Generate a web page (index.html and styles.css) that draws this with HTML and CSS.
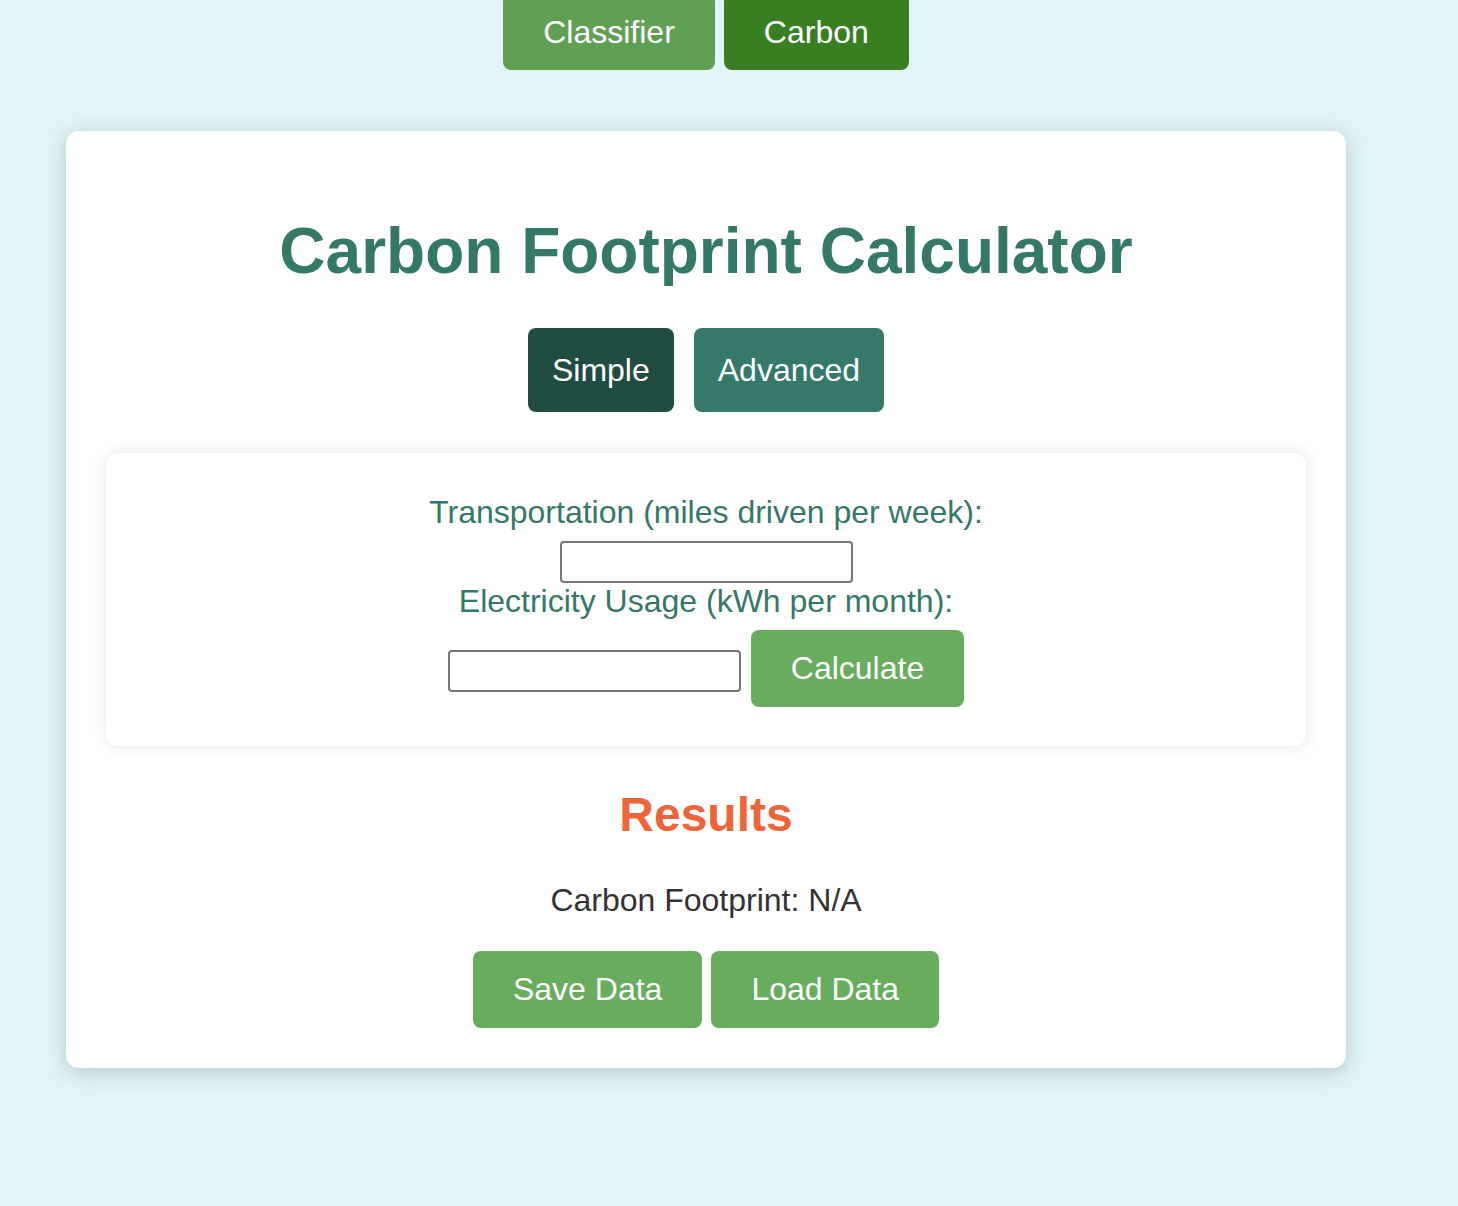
FILE: index.html
```html
<!DOCTYPE html>
<html lang="en">
<head>
<meta charset="utf-8">
<title>Carbon Footprint Calculator</title>
<link rel="stylesheet" href="styles.css">
</head>
<body>
<div class="page">
  <nav class="topnav">
    <button class="nav-btn nav-classifier">Classifier</button>
    <button class="nav-btn nav-carbon">Carbon</button>
  </nav>
  <main class="card">
    <h1 class="title">Carbon Footprint Calculator</h1>
    <div class="modes">
      <button class="mode-btn mode-simple">Simple</button>
      <button class="mode-btn mode-advanced">Advanced</button>
    </div>
    <div class="form-card">
      <label class="field-label" for="miles">Transportation (miles driven per week):</label>
      <input class="field-input" id="miles" type="text">
      <label class="field-label" for="kwh">Electricity Usage (kWh per month):</label>
      <div class="field-row">
        <input class="field-input" id="kwh" type="text">
        <button class="green-btn">Calculate</button>
      </div>
    </div>
    <h2 class="results-title">Results</h2>
    <p class="results-text">Carbon Footprint: N/A</p>
    <div class="data-actions">
      <button class="green-btn">Save Data</button>
      <button class="green-btn">Load Data</button>
    </div>
  </main>
</div>
</body>
</html>
```

FILE: styles.css
```css
html, body {
  margin: 0;
  padding: 0;
  background: #e2f4f8;
  font-family: "Liberation Sans", Arial, sans-serif;
  min-height: 100%;
}

.page {
  width: 1412px;
  min-height: 1206px;
  box-sizing: border-box;
  padding-bottom: 60px;
  display: flex;
  flex-direction: column;
  align-items: center;
}

button {
  font-family: "Liberation Sans", Arial, sans-serif;
  font-size: 32px;
  line-height: 37px;
  color: #ffffff;
  border: none;
  cursor: pointer;
}

.topnav {
  display: flex;
  gap: 9px;
  margin-top: -6px;
}

.nav-btn {
  padding: 20px 40px 19px;
  border-radius: 8px;
}

.nav-classifier { background: #5fa055; }
.nav-carbon { background: #387f22; }

.card {
  box-sizing: border-box;
  width: 1280px;
  margin-top: 61px;
  padding: 40px;
  background: #ffffff;
  border-radius: 13px;
  box-shadow: 0 4px 20px rgba(30, 70, 80, 0.25);
  display: flex;
  flex-direction: column;
  align-items: center;
}

.title {
  margin: 43px 0 40px;
  font-size: 64px;
  line-height: 74px;
  font-weight: bold;
  color: #347867;
}

.modes {
  display: flex;
  gap: 20px;
  margin-bottom: 41px;
}

.mode-btn {
  padding: 24px 24px 23px;
  border-radius: 8px;
}

.mode-simple { background: #1f4d41; }
.mode-advanced { background: #35796b; }

.form-card {
  box-sizing: border-box;
  width: 1200px;
  padding: 41px 40px 39px;
  border-radius: 12px;
  background: #ffffff;
  box-shadow: 0 0 16px rgba(0, 0, 0, 0.1);
  display: flex;
  flex-direction: column;
  align-items: center;
}

.field-label {
  display: block;
  font-size: 32px;
  line-height: 37px;
  color: #347867;
  margin-bottom: 10px;
}

.field-input {
  box-sizing: border-box;
  width: 293px;
  height: 42px;
  border: 2px solid #767676;
  border-radius: 4px;
  background: #ffffff;
  font-size: 16px;
}

.field-row {
  display: flex;
  align-items: center;
  gap: 10px;
}

.field-row .field-input {
  margin-top: 5px;
}

.green-btn {
  padding: 20px 40px;
  border-radius: 8px;
  background: #68ad5e;
}

.results-title {
  margin: 41px 0 40px;
  font-size: 48px;
  line-height: 55px;
  font-weight: bold;
  color: #ef6537;
}

.results-text {
  margin: 0 0 32px;
  font-size: 32px;
  line-height: 37px;
  color: #333333;
}

.data-actions {
  display: flex;
  gap: 9px;
}
```
